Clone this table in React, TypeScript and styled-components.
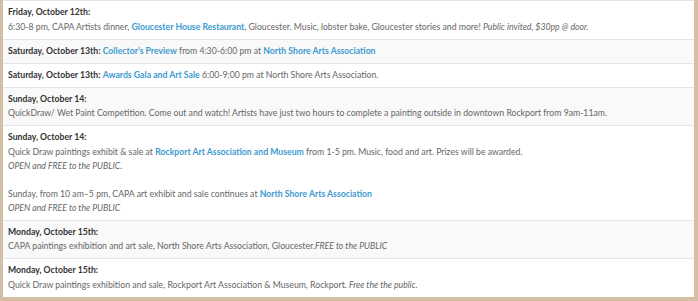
import { ReactNode } from "react";
import styled, { createGlobalStyle } from "styled-components";

const GlobalStyle = createGlobalStyle`
  html, body {
    margin: 0;
    padding: 0;
    background: #d4bea6;
  }
  body {
    font-family: Lato, "Open Sans", sans-serif;
  }
`;

const Frame = styled.div`
  padding: 0 4px 4px 3px;
`;

const Schedule = styled.div`
  background: #fff;
  display: flex;
  flex-direction: column;
`;

type RowProps = {
  striped: boolean;
};

const Row = styled.div<RowProps>`
  padding: 4px 5px 5px;
  border-top: 1px solid #e4e4e4;
  background: ${(props) => (props.striped ? "#f9f9f9" : "#fff")};
  color: #666;
  font-size: 8.7px;
  line-height: 14px;
`;

type LineProps = {
  heading?: boolean;
};

const Line = styled.div<LineProps>`
  white-space: nowrap;
  line-height: ${(props) => (props.heading ? "14.5px" : "14px")};
  em {
    font-style: italic;
  }
`;

const Day = styled.strong`
  color: #333;
  font-weight: 700;
`;

const Link = styled.a`
  color: #3d9ad0;
  font-weight: 700;
  cursor: pointer;
`;

type Event = {
  day: string;
  inline?: boolean;
  body: ReactNode;
};

const events: Event[] = [
  {
    day: "Friday, October 12th:",
    body: (
      <Line>
        6:30-8 pm, CAPA Artists dinner, <Link>Gloucester House Restaurant</Link>,
        Gloucester. Music, lobster bake, Gloucester stories and more!{" "}
        <em>Public invited, $30pp @ door.</em>
      </Line>
    ),
  },
  {
    day: "Saturday, October 13th:",
    inline: true,
    body: (
      <>
        <Link>Collector’s Preview</Link> from 4:30-6:00 pm at{" "}
        <Link>North Shore Arts Association</Link>
      </>
    ),
  },
  {
    day: "Saturday, October 13th:",
    inline: true,
    body: (
      <>
        <Link>Awards Gala and Art Sale</Link> 6:00-9:00 pm at North Shore Arts
        Association.
      </>
    ),
  },
  {
    day: "Sunday, October 14:",
    body: (
      <Line>
        QuickDraw/ Wet Paint Competition. Come out and watch! Artists have just
        two hours to complete a painting outside in downtown Rockport from
        9am-11am.
      </Line>
    ),
  },
  {
    day: "Sunday, October 14:",
    body: (
      <>
        <Line>
          Quick Draw paintings exhibit &amp; sale at{" "}
          <Link>Rockport Art Association and Museum</Link> from 1-5 pm. Music,
          food and art. Prizes will be awarded.
        </Line>
        <Line>
          <em>OPEN and FREE to the PUBLIC.</em>
        </Line>
        <Line>&nbsp;</Line>
        <Line>
          Sunday, from 10 am–5 pm, CAPA art exhibit and sale continues at{" "}
          <Link>North Shore Arts Association</Link>
        </Line>
        <Line>
          <em>OPEN and FREE to the PUBLIC</em>
        </Line>
      </>
    ),
  },
  {
    day: "Monday, October 15th:",
    body: (
      <Line>
        CAPA paintings exhibition and art sale, North Shore Arts Association,
        Gloucester.<em>FREE to the PUBLIC</em>
      </Line>
    ),
  },
  {
    day: "Monday, October 15th:",
    body: (
      <Line>
        Quick Draw paintings exhibition and sale, Rockport Art Association &amp;
        Museum, Rockport. <em>Free the the public.</em>
      </Line>
    ),
  },
];

export default function App() {
  return (
    <>
      <GlobalStyle />
      <Frame>
        <Schedule>
          {events.map((event, index) => (
            <Row key={index} striped={index % 2 === 1}>
              {event.inline ? (
                <Line>
                  <Day>{event.day}</Day> {event.body}
                </Line>
              ) : (
                <>
                  <Line heading>
                    <Day>{event.day}</Day>
                  </Line>
                  {event.body}
                </>
              )}
            </Row>
          ))}
        </Schedule>
      </Frame>
    </>
  );
}
